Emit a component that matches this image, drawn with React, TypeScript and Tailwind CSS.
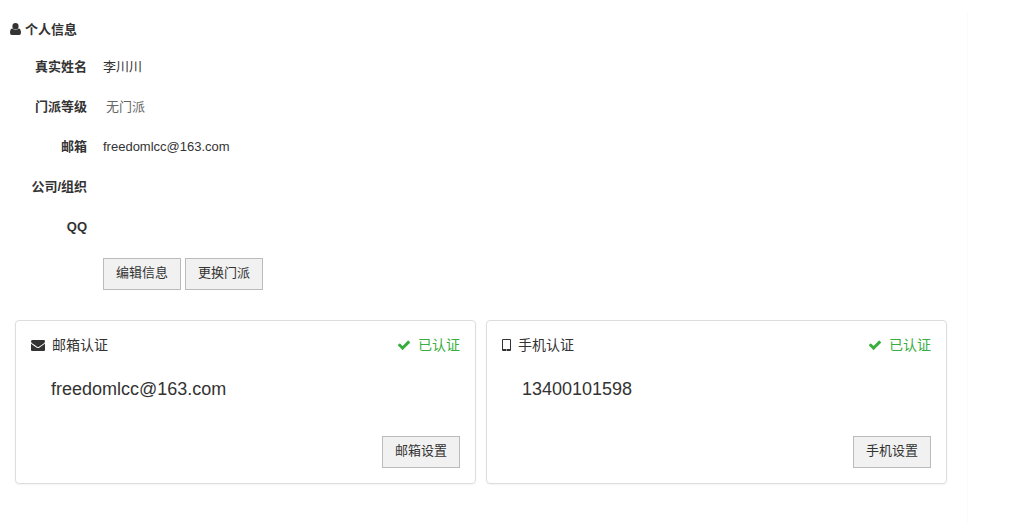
import type { ReactNode } from "react";

function UserIcon() {
  return (
    <svg viewBox="0 0 11 12" className="mb-0.5 h-3 w-[11px] fill-current" aria-hidden="true">
      <path d="M5.500 0a3.100 3.200 0 0 1 3.100 3.200a3.100 3.200 0 0 1-6.200 0a3.100 3.200 0 0 1 3.100-3.200zM2.400 5.600q1.300 1.400 3.100 1.400t3.100-1.400q2.400.2 2.400 4.200q0 2.200-1.900 2.200H1.900q-1.900 0-1.900-2.200q0-4 2.400-4.200z" />
    </svg>
  );
}

function EnvelopeIcon() {
  return (
    <svg viewBox="0 0 1792 1792" className="h-3.5 w-3.5 fill-current" aria-hidden="true">
      <path d="M1792 710v794q0 66-47 113t-113 47h-1472q-66 0-113-47t-47-113v-794q44 49 101 87 362 246 497 345 57 42 92.500 65.500t94.500 48 110 24.500h2q51 0 110-24.500t94.500-48 92.500-65.500q170-123 498-345 57-39 100-87zm0-294q0 79-49 151t-122 123q-376 261-468 325-10 7-42.500 31t-54 38.500-52 32.500-57.500 27-50 9h-2q-23 0-50-9t-57.500-27-52-32.500-54-38.500-42.500-31q-91-64-262-182.500t-205-142.500q-62-42-117-115.500t-55-136.500q0-78 41.500-130t118.500-52h1472q65 0 112.500 47t47.500 113z" />
    </svg>
  );
}

function TabletIcon() {
  return (
    <svg viewBox="0 0 9 12" className="h-3 w-[9px] fill-current" aria-hidden="true">
      <path
        fillRule="evenodd"
        d="M1 0h7q1 0 1 1v10q0 1-1 1H1q-1 0-1-1V1q0-1 1-1zM1 1v9h7V1zM4 10.500h1v1H4z"
      />
    </svg>
  );
}

function CheckIcon() {
  return (
    <svg viewBox="0 0 1792 1792" className="h-3.5 w-3.5 fill-current" aria-hidden="true">
      <path d="M1671 566q0 40-28 68l-724 724-136 136q-28 28-68 28t-68-28l-136-136-362-362q-28-28-28-68t28-68l136-136q28-28 68-28t68 28l294 295 656-657q28-28 68-28t68 28l136 136q28 28 28 68z" />
    </svg>
  );
}

function Button({ children }: { children: ReactNode }) {
  return (
    <button
      type="button"
      className="h-8 border border-[#bbb] bg-[#f1f1f1] px-3 pb-0.5 text-[13px] leading-5 text-[#333] hover:bg-[#e6e6e6]"
    >
      {children}
    </button>
  );
}

function Row({ label, children }: { label: string; children?: ReactNode }) {
  return (
    <div className="flex h-10 items-center gap-4">
      <dt className="w-[87px] text-right font-bold">{label}</dt>
      <dd>{children}</dd>
    </div>
  );
}

type CardProps = {
  icon: ReactNode;
  title: string;
  value: string;
  action: string;
};

function VerifyCard({ icon, title, value, action }: CardProps) {
  return (
    <section className="rounded border border-[#ddd] p-[15px] shadow-xs">
      <div className="flex h-[18px] items-center justify-between text-sm">
        <h3 className="flex items-center gap-[7px]">
          {icon}
          {title}
        </h3>
        <span className="flex items-center gap-[7px] text-[#39ae3f]">
          <CheckIcon />
          已认证
        </span>
      </div>
      <p className="mt-[23px] pl-5 text-lg leading-6">{value}</p>
      <div className="mt-[35px] flex justify-end">
        <Button>{action}</Button>
      </div>
    </section>
  );
}

export default function App() {
  return (
    <div className="min-h-screen bg-white pt-3 font-['Liberation_Sans','Noto_Sans_CJK_SC',sans-serif] text-[13px] text-[#333]">
      <main className="mr-[66px] min-h-[calc(100vh-12px)] border-r border-[#fafafa] pb-9">
        <h2 className="flex h-[35px] items-center gap-1 pl-2.5 font-bold">
          <UserIcon />
          个人信息
        </h2>

        <dl>
          <Row label="真实姓名">李川川</Row>
          <Row label="门派等级">
            <span className="pl-[3px] text-[#666]">无门派</span>
          </Row>
          <Row label="邮箱">freedomlcc@163.com</Row>
          <Row label="公司/组织" />
          <Row label="QQ" />
        </dl>

        <div className="mt-[11px] flex gap-1 pl-[103px]">
          <Button>编辑信息</Button>
          <Button>更换门派</Button>
        </div>

        <div className="mt-[30px] grid grid-cols-2 gap-2.5 pr-5 pl-[15px]">
          <VerifyCard
            icon={<EnvelopeIcon />}
            title="邮箱认证"
            value="freedomlcc@163.com"
            action="邮箱设置"
          />
          <VerifyCard
            icon={<TabletIcon />}
            title="手机认证"
            value="13400101598"
            action="手机设置"
          />
        </div>
      </main>
    </div>
  );
}
